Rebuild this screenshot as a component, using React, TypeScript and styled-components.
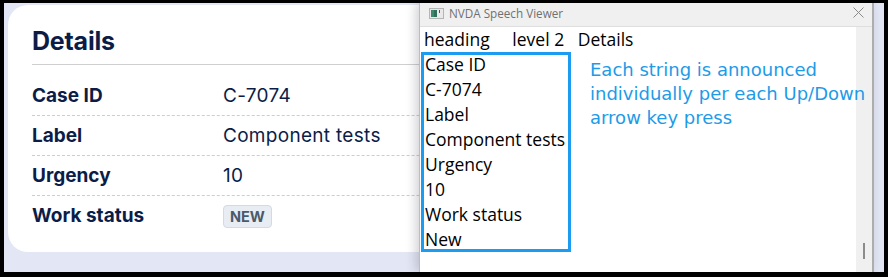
import styled, { createGlobalStyle } from 'styled-components'

type Detail = {
    label: string
    value: string
    badge?: boolean
}

const details: Detail[] = [
    { label: 'Case ID', value: 'C-7074' },
    { label: 'Label', value: 'Component tests' },
    { label: 'Urgency', value: '10' },
    { label: 'Work status', value: 'NEW', badge: true },
]

const spoken = ['Case ID', 'C-7074', 'Label', 'Component tests', 'Urgency', '10', 'Work status', 'New']

export default function App() {
    return (
        <>
            <GlobalStyle />
            <Frame>
                <Card>
                    <Heading>Details</Heading>
                    <List>
                        {details.map((item) => (
                            <Row key={item.label}>
                                <Term>{item.label}</Term>
                                <Value>{item.badge ? <Badge>{item.value}</Badge> : item.value}</Value>
                            </Row>
                        ))}
                    </List>
                </Card>

                <Viewer>
                    <TitleBar>
                        <AppIcon width="15" height="11" viewBox="0 0 15 11">
                            <rect x="0.5" y="0.5" width="14" height="10" fill="#e9e9e9" stroke="#b5b5b5" />
                            <rect x="2" y="2" width="6" height="7" fill="#2f6f5e" />
                            <rect x="2" y="2" width="3" height="7" fill="#3c8a6a" />
                            <rect x="10" y="2" width="1" height="3" fill="#555" />
                        </AppIcon>
                        <WindowTitle>NVDA Speech Viewer</WindowTitle>
                        <CloseIcon width="11" height="11" viewBox="0 0 11 11">
                            <path d="M0.5 0.5 L10.5 10.5 M10.5 0.5 L0.5 10.5" stroke="#8a8a8a" strokeWidth="1" />
                        </CloseIcon>
                    </TitleBar>
                    <ViewerBody>
                        <Output>
                            <OutputLine $indent>{'heading     level 2   Details'}</OutputLine>
                            <OutputRow>
                                <Highlight>
                                    <HighlightInner>
                                        {spoken.map((line, i) => (
                                            <OutputLine key={i}>{line}</OutputLine>
                                        ))}
                                    </HighlightInner>
                                </Highlight>
                                <Note>
                                    Each string is announced
                                    <br />
                                    individually per each Up/Down
                                    <br />
                                    arrow key press
                                </Note>
                            </OutputRow>
                        </Output>
                        <Scrollbar>
                            <Thumb />
                        </Scrollbar>
                    </ViewerBody>
                </Viewer>
            </Frame>
        </>
    )
}

const GlobalStyle = createGlobalStyle`
    body {
        margin: 0;
        overflow: hidden;
        background: #000;
    }
`

const Frame = styled.div`
    position: relative;
    width: 888px;
    height: 277px;
    box-sizing: border-box;
    border-style: solid;
    border-color: #000;
    border-width: 3px 4px 5px 4px;
    background: #e3e6f4;
    overflow: hidden;
`

const Card = styled.section`
    margin: 2px 0 0 4px;
    width: 850px;
    height: 247px;
    box-sizing: border-box;
    padding: 20px 24px 0 24px;
    background: #fff;
    border-radius: 20px;
    font-family: Inter, Roboto, 'Liberation Sans', sans-serif;
    color: #0b1d47;
`

const Heading = styled.h2`
    margin: 0;
    padding-bottom: 7px;
    font-size: 25px;
    line-height: 32px;
    font-weight: 700;
    letter-spacing: -0.2px;
    border-bottom: 1px solid #cfcfcf;
`

const List = styled.dl`
    margin: 11px 0 0 0;
`

const Row = styled.div`
    display: flex;
    align-items: center;
    height: 39px;
    border-bottom: 1px dashed #cdcdcd;

    &:last-child {
        border-bottom: none;
    }
`

const Term = styled.dt`
    width: 191px;
    font-size: 19px;
    font-weight: 700;
`

const Value = styled.dd`
    margin: 0;
    font-size: 19px;
    letter-spacing: 0.3px;
`

const Badge = styled.span`
    display: inline-block;
    padding: 0 6px;
    height: 21px;
    line-height: 21px;
    font-size: 14.5px;
    font-weight: 700;
    letter-spacing: 0;
    color: #4a5a6c;
    background: #e8edf3;
    border: 1px solid #d3dae3;
    border-radius: 4px;
`

const Viewer = styled.div`
    position: absolute;
    left: 415px;
    top: 0;
    width: 455px;
    height: 269px;
    box-sizing: border-box;
    display: flex;
    flex-direction: column;
    border-left: 1px solid #bdbdbd;
    border-right: 2px solid #adadad;
    background: #fff;
    box-shadow: -3px 0 10px rgba(40, 40, 60, 0.22);
`

const TitleBar = styled.div`
    display: flex;
    align-items: center;
    height: 23px;
    padding: 0 8px 0 9px;
    background: #f0f0f0;
    border-bottom: 1px solid #dedede;
`

const AppIcon = styled.svg`
    flex: none;
    margin-top: -3px;
`

const WindowTitle = styled.span`
    flex: 1;
    margin-left: 5px;
    margin-top: -3px;
    font-family: 'Open Sans', 'Noto Sans', sans-serif;
    font-size: 11.7px;
    color: #707070;
`

const CloseIcon = styled.svg`
    flex: none;
    margin-top: -4px;
`

const ViewerBody = styled.div`
    flex: 1;
    display: flex;
    min-height: 0;
`

const Output = styled.div`
    flex: 1;
    min-width: 0;
    padding-left: 1px;
    font-family: 'Open Sans', 'Noto Sans', sans-serif;
    font-size: 17.5px;
    color: #000;
`

const OutputLine = styled.div<{ $indent?: boolean }>`
    height: 25px;
    line-height: 25px;
    white-space: pre;
    padding-left: ${(p) => (p.$indent ? '3px' : '1px')};
`

const OutputRow = styled.div`
    display: flex;
    align-items: flex-start;
`

const Highlight = styled.div`
    flex: none;
    width: 150px;
    box-sizing: border-box;
    border: 3px solid #1c9cf0;
`

const HighlightInner = styled.div`
    margin: -3px 0;
`

/* annotation drawn over the screenshot, so it runs across the scrollbar */
const Note = styled.p`
    position: relative;
    z-index: 1;
    flex: none;
    margin: 6px 0 0 19px;
    white-space: nowrap;
    font-family: 'DejaVu Sans', 'Liberation Sans', sans-serif;
    font-size: 18px;
    line-height: 24px;
    color: #1d9be8;
`

const Scrollbar = styled.div`
    flex: none;
    width: 16px;
    display: flex;
    flex-direction: column;
    justify-content: flex-end;
    padding-bottom: 13px;
    box-sizing: border-box;
    background: #f0f0f0;
`

const Thumb = styled.div`
    width: 2px;
    height: 16px;
    margin-left: 7px;
    background: #8c8c8c;
`
